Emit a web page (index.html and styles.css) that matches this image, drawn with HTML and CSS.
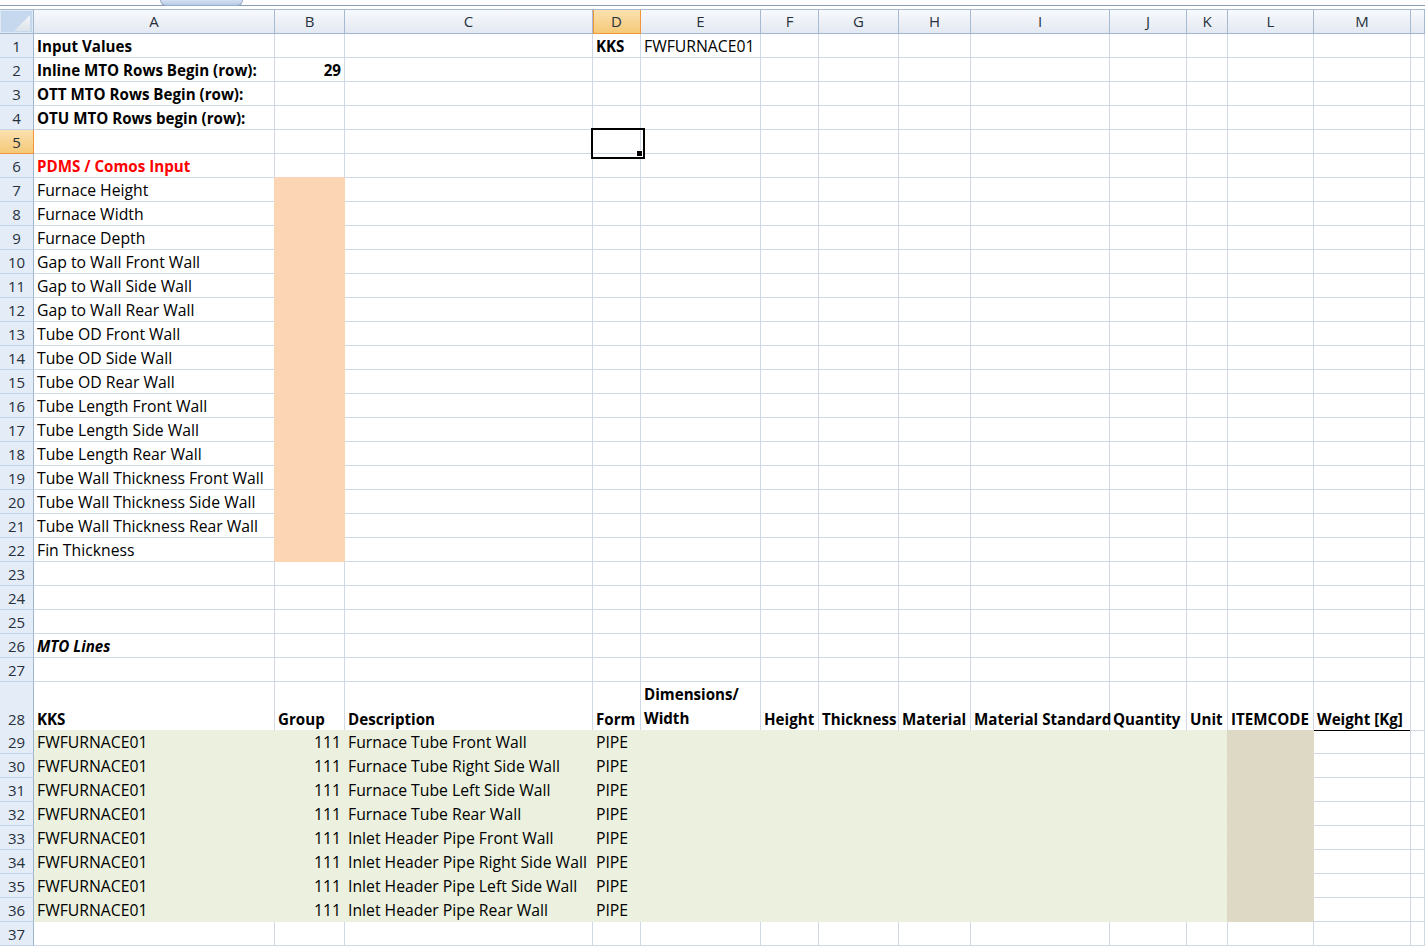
FILE: index.html
```html
<!DOCTYPE html>
<html>
<head>
<meta charset="utf-8">
<title>MTO Sheet</title>
<link rel="stylesheet" href="styles.css">
</head>
<body>
<div class="topbar"><div class="tab"></div></div>
<div class="sheet">
  <div class="r hd"><span class="corner"></span><span class="ch">A</span><span class="ch">B</span><span class="ch">C</span><span class="ch on">D</span><span class="ch">E</span><span class="ch">F</span><span class="ch">G</span><span class="ch">H</span><span class="ch">I</span><span class="ch">J</span><span class="ch">K</span><span class="ch">L</span><span class="ch">M</span><span class="ch"></span></div>

  <div class="r"><span class="rh">1</span><span class="b">Input Values</span><i></i><i></i><span class="b">KKS</span><span>FWFURNACE01</span><i></i><i></i><i></i><i></i><i></i><i></i><i></i><i></i><i></i></div>
  <div class="r"><span class="rh">2</span><span class="b">Inline MTO Rows Begin (row):</span><span class="b num">29</span><i></i><i></i><i></i><i></i><i></i><i></i><i></i><i></i><i></i><i></i><i></i><i></i></div>
  <div class="r"><span class="rh">3</span><span class="b">OTT MTO Rows Begin (row):</span><i></i><i></i><i></i><i></i><i></i><i></i><i></i><i></i><i></i><i></i><i></i><i></i><i></i></div>
  <div class="r"><span class="rh">4</span><span class="b">OTU MTO Rows begin (row):</span><i></i><i></i><i></i><i></i><i></i><i></i><i></i><i></i><i></i><i></i><i></i><i></i><i></i></div>
  <div class="r"><span class="rh on">5</span><i></i><i></i><i></i><i class="sel"></i><i></i><i></i><i></i><i></i><i></i><i></i><i></i><i></i><i></i><i></i></div>
  <div class="r"><span class="rh">6</span><span class="b red">PDMS / Comos Input</span><i class="pb"></i><i></i><i></i><i></i><i></i><i></i><i></i><i></i><i></i><i></i><i></i><i></i><i></i></div>
  <div class="r"><span class="rh">7</span><span class="pl">Furnace Height</span><i class="pe"></i><i></i><i></i><i></i><i></i><i></i><i></i><i></i><i></i><i></i><i></i><i></i><i></i></div>
  <div class="r"><span class="rh">8</span><span class="pl">Furnace Width</span><i class="pe"></i><i></i><i></i><i></i><i></i><i></i><i></i><i></i><i></i><i></i><i></i><i></i><i></i></div>
  <div class="r"><span class="rh">9</span><span class="pl">Furnace Depth</span><i class="pe"></i><i></i><i></i><i></i><i></i><i></i><i></i><i></i><i></i><i></i><i></i><i></i><i></i></div>
  <div class="r"><span class="rh">10</span><span class="pl">Gap to Wall Front Wall</span><i class="pe"></i><i></i><i></i><i></i><i></i><i></i><i></i><i></i><i></i><i></i><i></i><i></i><i></i></div>
  <div class="r"><span class="rh">11</span><span class="pl">Gap to Wall Side Wall</span><i class="pe"></i><i></i><i></i><i></i><i></i><i></i><i></i><i></i><i></i><i></i><i></i><i></i><i></i></div>
  <div class="r"><span class="rh">12</span><span class="pl">Gap to Wall Rear Wall</span><i class="pe"></i><i></i><i></i><i></i><i></i><i></i><i></i><i></i><i></i><i></i><i></i><i></i><i></i></div>
  <div class="r"><span class="rh">13</span><span class="pl">Tube OD Front Wall</span><i class="pe"></i><i></i><i></i><i></i><i></i><i></i><i></i><i></i><i></i><i></i><i></i><i></i><i></i></div>
  <div class="r"><span class="rh">14</span><span class="pl">Tube OD Side Wall</span><i class="pe"></i><i></i><i></i><i></i><i></i><i></i><i></i><i></i><i></i><i></i><i></i><i></i><i></i></div>
  <div class="r"><span class="rh">15</span><span class="pl">Tube OD Rear Wall</span><i class="pe"></i><i></i><i></i><i></i><i></i><i></i><i></i><i></i><i></i><i></i><i></i><i></i><i></i></div>
  <div class="r"><span class="rh">16</span><span class="pl">Tube Length Front Wall</span><i class="pe"></i><i></i><i></i><i></i><i></i><i></i><i></i><i></i><i></i><i></i><i></i><i></i><i></i></div>
  <div class="r"><span class="rh">17</span><span class="pl">Tube Length Side Wall</span><i class="pe"></i><i></i><i></i><i></i><i></i><i></i><i></i><i></i><i></i><i></i><i></i><i></i><i></i></div>
  <div class="r"><span class="rh">18</span><span class="pl">Tube Length Rear Wall</span><i class="pe"></i><i></i><i></i><i></i><i></i><i></i><i></i><i></i><i></i><i></i><i></i><i></i><i></i></div>
  <div class="r"><span class="rh">19</span><span class="pl">Tube Wall Thickness Front Wall</span><i class="pe"></i><i></i><i></i><i></i><i></i><i></i><i></i><i></i><i></i><i></i><i></i><i></i><i></i></div>
  <div class="r"><span class="rh">20</span><span class="pl">Tube Wall Thickness Side Wall</span><i class="pe"></i><i></i><i></i><i></i><i></i><i></i><i></i><i></i><i></i><i></i><i></i><i></i><i></i></div>
  <div class="r"><span class="rh">21</span><span class="pl">Tube Wall Thickness Rear Wall</span><i class="pe"></i><i></i><i></i><i></i><i></i><i></i><i></i><i></i><i></i><i></i><i></i><i></i><i></i></div>
  <div class="r"><span class="rh">22</span><span class="pl">Fin Thickness</span><i class="pe"></i><i></i><i></i><i></i><i></i><i></i><i></i><i></i><i></i><i></i><i></i><i></i><i></i></div>
  <div class="r"><span class="rh">23</span><i></i><i></i><i></i><i></i><i></i><i></i><i></i><i></i><i></i><i></i><i></i><i></i><i></i><i></i></div>
  <div class="r"><span class="rh">24</span><i></i><i></i><i></i><i></i><i></i><i></i><i></i><i></i><i></i><i></i><i></i><i></i><i></i><i></i></div>
  <div class="r"><span class="rh">25</span><i></i><i></i><i></i><i></i><i></i><i></i><i></i><i></i><i></i><i></i><i></i><i></i><i></i><i></i></div>
  <div class="r"><span class="rh">26</span><span class="b it">MTO Lines</span><i></i><i></i><i></i><i></i><i></i><i></i><i></i><i></i><i></i><i></i><i></i><i></i><i></i></div>
  <div class="r"><span class="rh">27</span><i></i><i></i><i></i><i></i><i></i><i></i><i></i><i></i><i></i><i></i><i></i><i></i><i></i><i></i></div>
  <div class="r tall"><span class="rh">28</span><span class="b bb">KKS</span><span class="b bb">Group</span><span class="b bb">Description</span><span class="b bb">Form</span><span class="b bb wrap">Dimensions/<br>Width</span><span class="b bb">Height</span><span class="b bb">Thickness</span><span class="b bb">Material</span><span class="b bb">Material Standard</span><span class="b bb">Quantity</span><span class="b bb">Unit</span><span class="b bb">ITEMCODE</span><span class="b bb">Weight [Kg]</span><i></i></div>
  <div class="r"><span class="rh">29</span><span class="gr">FWFURNACE01</span><span class="gr num">111</span><span class="gr">Furnace Tube Front Wall</span><span class="gr">PIPE</span><i class="gr"></i><i class="gr"></i><i class="gr"></i><i class="gr"></i><i class="gr"></i><i class="gr"></i><i class="gr tr"></i><i class="tn"></i><i></i><i></i></div>
  <div class="r"><span class="rh">30</span><span class="gr">FWFURNACE01</span><span class="gr num">111</span><span class="gr">Furnace Tube Right Side Wall</span><span class="gr">PIPE</span><i class="gr"></i><i class="gr"></i><i class="gr"></i><i class="gr"></i><i class="gr"></i><i class="gr"></i><i class="gr tr"></i><i class="tn"></i><i></i><i></i></div>
  <div class="r"><span class="rh">31</span><span class="gr">FWFURNACE01</span><span class="gr num">111</span><span class="gr">Furnace Tube Left Side Wall</span><span class="gr">PIPE</span><i class="gr"></i><i class="gr"></i><i class="gr"></i><i class="gr"></i><i class="gr"></i><i class="gr"></i><i class="gr tr"></i><i class="tn"></i><i></i><i></i></div>
  <div class="r"><span class="rh">32</span><span class="gr">FWFURNACE01</span><span class="gr num">111</span><span class="gr">Furnace Tube Rear Wall</span><span class="gr">PIPE</span><i class="gr"></i><i class="gr"></i><i class="gr"></i><i class="gr"></i><i class="gr"></i><i class="gr"></i><i class="gr tr"></i><i class="tn"></i><i></i><i></i></div>
  <div class="r"><span class="rh">33</span><span class="gr">FWFURNACE01</span><span class="gr num">111</span><span class="gr">Inlet Header Pipe Front Wall</span><span class="gr">PIPE</span><i class="gr"></i><i class="gr"></i><i class="gr"></i><i class="gr"></i><i class="gr"></i><i class="gr"></i><i class="gr tr"></i><i class="tn"></i><i></i><i></i></div>
  <div class="r"><span class="rh">34</span><span class="gr">FWFURNACE01</span><span class="gr num">111</span><span class="gr">Inlet Header Pipe Right Side Wall</span><span class="gr">PIPE</span><i class="gr"></i><i class="gr"></i><i class="gr"></i><i class="gr"></i><i class="gr"></i><i class="gr"></i><i class="gr tr"></i><i class="tn"></i><i></i><i></i></div>
  <div class="r"><span class="rh">35</span><span class="gr">FWFURNACE01</span><span class="gr num">111</span><span class="gr">Inlet Header Pipe Left Side Wall</span><span class="gr">PIPE</span><i class="gr"></i><i class="gr"></i><i class="gr"></i><i class="gr"></i><i class="gr"></i><i class="gr"></i><i class="gr tr"></i><i class="tn"></i><i></i><i></i></div>
  <div class="r"><span class="rh">36</span><span class="gr">FWFURNACE01</span><span class="gr num">111</span><span class="gr">Inlet Header Pipe Rear Wall</span><span class="gr">PIPE</span><i class="gr"></i><i class="gr"></i><i class="gr"></i><i class="gr"></i><i class="gr"></i><i class="gr"></i><i class="gr tr"></i><i class="tn"></i><i></i><i></i></div>
  <div class="r"><span class="rh">37</span><i></i><i></i><i></i><i></i><i></i><i></i><i></i><i></i><i></i><i></i><i></i><i></i><i></i><i></i></div>
</div>
</body>
</html>
```
FILE: styles.css
```css
* { box-sizing: border-box; }

html, body {
  margin: 0;
  background: #ffffff;
  overflow: hidden;
}

body {
  font-family: "Open Sans", "Noto Sans", sans-serif;
  font-size: 15px;
  color: #000000;
  --cols: 34px 241px 70px 248px 48px 120px 58px 80px 72px 139px 77px 41px 86px 97px 1fr;
}

.topbar {
  height: 10px;
  background: linear-gradient(to bottom, #ffffff 0 5px, #8a9bb2 5px 6px, #ffffff 6px 9px, #a7bad2 9px 10px);
}

.tab {
  margin-left: 160px;
  width: 83px;
  height: 6px;
  background: linear-gradient(to bottom, #d3e0f1, #b9cde6);
  border: 1px solid #97adc9;
  border-top: none;
  border-radius: 0 0 9px 9px;
}

.r {
  display: grid;
  grid-template-columns: var(--cols);
  height: 24px;
}

.r.tall { height: 48px; }

.r > * {
  font-style: normal;
  font-size: 15.75px;
  display: flex;
  align-items: flex-end;
  white-space: nowrap;
  line-height: 21px;
  padding: 0 3px 0 3px;
  min-width: 0;
  border-right: 1px solid #d0d7e5;
  border-bottom: 1px solid #d0d7e5;
}

.r > .b { font-weight: bold; font-size: 15.15px; }

/* column header */
.r.hd > * {
  font-size: 15px;
  justify-content: center;
  align-items: center;
  padding: 0;
  color: #27313d;
  background: linear-gradient(to bottom, #f7f9fc, #e3e9f2);
  border-right-color: #a5b9d1;
  border-bottom-color: #9eb6ce;
}

.r.hd > .ch.on {
  background: linear-gradient(to bottom, #fae1b0, #f5c978);
  border-right-color: #f29536;
  border-bottom-color: #f29536;
  box-shadow: inset 1px 0 0 #f29536;
}

.r.hd > .corner {
  position: relative;
  background: #c6d8ee;
  box-shadow: inset 0 0 0 1px #dfe9f5;
  border-right-color: #9eb6ce;
}

.corner::after {
  content: "";
  position: absolute;
  left: 14px;
  top: 5px;
  width: 16px;
  height: 16px;
  background: linear-gradient(to bottom, #f4f6f9, #dde3ea);
  clip-path: polygon(100% 0, 100% 100%, 0 100%);
}

/* row header */
.r > .rh {
  font-size: 15px;
  justify-content: center;
  padding: 0;
  color: #27313d;
  background: #e4ecf7;
  border-right-color: #9eb6ce;
  border-bottom-color: #c5d3e6;
}

.r > .rh.on {
  background: linear-gradient(to bottom, #fae1b0, #f5c978);
  border-bottom-color: #f29536;
  border-right-color: #f29536;
}

.r > .it { font-style: italic; }
.red { color: #ff0000; }
.num { justify-content: flex-end; }

.r > .wrap {
  white-space: normal;
  line-height: 24px;
}

.r > .bb { border-bottom-color: #000000; }

/* fills */
.r > .pe { background: #fcd5b4; border-color: #fcd5b4; }
.r > .pl { border-right-color: #fcd5b4; }
.r > .pb { border-bottom-color: #fcd5b4; }
.r > .gr { background: #ebf1de; border-color: #ebf1de; }
.r > .gr.tr { border-right-color: #ddd9c4; }
.r > .tn { background: #ddd9c4; border-color: #ddd9c4; }

/* active cell */
.sel { position: relative; }
.sel::after {
  content: "";
  position: absolute;
  left: -2px;
  top: -2px;
  width: 50px;
  height: 27px;
  border: 2px solid #000000;
  z-index: 2;
}
.sel::before {
  content: "";
  position: absolute;
  left: 44px;
  top: 21px;
  width: 5px;
  height: 5px;
  background: #000000;
  box-shadow: 0 0 0 1px #ffffff;
  z-index: 3;
}
```
